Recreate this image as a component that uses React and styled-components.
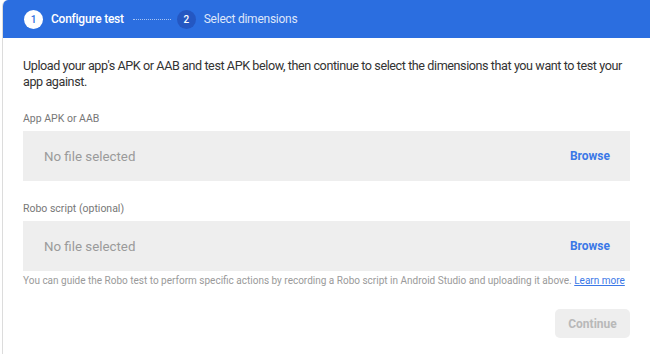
import styled, { createGlobalStyle } from "styled-components";

const GlobalStyle = createGlobalStyle`
    body {
        margin: 0;
        background: #fff;
        font-family: Roboto, "Liberation Sans", sans-serif;
    }
`;

const Card = styled.div`
    margin-left: 2px;
    width: 648px;
    height: 354px;
    border-left: 1px solid #dcdcdc;
    border-top-left-radius: 6px;
    overflow: hidden;
    box-sizing: border-box;
`;

const Stepper = styled.div`
    height: 38px;
    background: #2b6ee0;
    display: flex;
    align-items: center;
    padding-left: 21px;
    color: #fff;
`;

const Step = styled.div`
    display: flex;
    align-items: center;
    gap: 8px;
    font-size: 12px;
    letter-spacing: -0.25px;
    font-weight: ${(p) => (p.active ? 500 : 400)};
    color: ${(p) => (p.active ? "#fff" : "rgba(255,255,255,0.85)")};
`;

const StepNum = styled.span`
    width: 19px;
    height: 19px;
    border-radius: 50%;
    display: flex;
    align-items: center;
    justify-content: center;
    font-size: 10px;
    font-weight: 500;
    letter-spacing: 0;
    background: ${(p) => (p.active ? "#fff" : "#2457c2")};
    color: ${(p) => (p.active ? "#2b6ee0" : "#fff")};
`;

const Connector = styled.div`
    width: 38px;
    border-top: 1px dotted rgba(255, 255, 255, 0.6);
    margin: 0 6px 0 9px;
`;

const Body = styled.div`
    padding: 20px 20px 0 20px;
`;

const Intro = styled.p`
    margin: 0;
    font-size: 12.6px;
    letter-spacing: -0.42px;
    line-height: 16px;
    color: #333;
`;

const Label = styled.div`
    font-size: 10.5px;
    color: #777;
    margin: ${(p) => (p.first ? "22px" : "21px")} 0 6px;
`;

const FileBox = styled.div`
    height: 50px;
    background: #eeeeee;
    display: flex;
    align-items: center;
    justify-content: space-between;
    padding: 0 20px 0 21px;
`;

const Placeholder = styled.span`
    font-size: 13.3px;
    color: #9a9a9a;
`;

const Browse = styled.span`
    font-size: 12px;
    font-weight: 700;
    color: #3b78e7;
`;

const Hint = styled.p`
    margin: 4px 0 0;
    font-size: 10px;
    color: #9a9a9a;
    white-space: nowrap;
`;

const HintLink = styled.a`
    color: #3b78e7;
    text-decoration: underline;
`;

const Footer = styled.div`
    display: flex;
    justify-content: flex-end;
    margin-top: 23px;
`;

const ContinueButton = styled.button`
    width: 75px;
    height: 29px;
    border: none;
    border-radius: 5px;
    background: #eeeeee;
    color: #b9b9b9;
    font-family: inherit;
    font-size: 12px;
    font-weight: 700;
`;

const FileField = ({ label, first }) => (
    <>
        <Label first={first}>{label}</Label>
        <FileBox>
            <Placeholder>No file selected</Placeholder>
            <Browse>Browse</Browse>
        </FileBox>
    </>
);

const App = () => (
    <>
        <GlobalStyle />
        <Card>
            <Stepper>
                <Step active>
                    <StepNum active>1</StepNum>
                    Configure test
                </Step>
                <Connector />
                <Step>
                    <StepNum>2</StepNum>
                    Select dimensions
                </Step>
            </Stepper>
            <Body>
                <Intro>
                    Upload your app's APK or AAB and test APK below, then continue to select the
                    dimensions that you want to test your app against.
                </Intro>
                <FileField label="App APK or AAB" first />
                <FileField label="Robo script (optional)" />
                <Hint>
                    You can guide the Robo test to perform specific actions by recording a Robo
                    script in Android Studio and uploading it above.{" "}
                    <HintLink href="#">Learn more</HintLink>
                </Hint>
                <Footer>
                    <ContinueButton disabled>Continue</ContinueButton>
                </Footer>
            </Body>
        </Card>
    </>
);

export default App;
